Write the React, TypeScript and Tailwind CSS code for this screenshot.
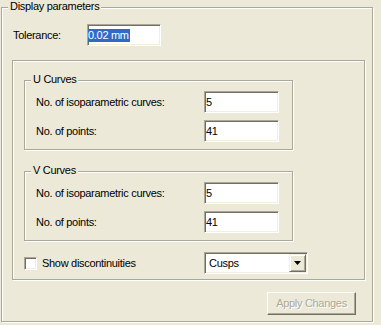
import type { ReactNode } from "react";

type GroupBoxProps = {
  title?: string;
  className?: string;
  children?: ReactNode;
};

// etched frame: gray line with a white line one pixel down/right
function GroupBox({ title, className = "", children }: GroupBoxProps) {
  return (
    <div
      className={`relative flex flex-col border border-[#aca899] shadow-[inset_1px_1px_0_#fff,1px_1px_0_#fff] ${className}`}
    >
      {title && (
        <span className="absolute -top-[8px] left-[6px] bg-[#ece9d8] px-[2px] leading-[13px]">
          {title}
        </span>
      )}
      {children}
    </div>
  );
}

const sunken =
  "border border-t-[#aca899] border-l-[#aca899] border-r-white border-b-white shadow-[inset_1px_1px_0_#716f64,inset_-1px_-1px_0_#f1efe2] bg-white";

function Field({ value }: { value: string }) {
  return (
    <div className={`flex h-[22px] w-[75px] items-center pl-[1px] ${sunken}`}>
      <span className="leading-[13px]">{value}</span>
    </div>
  );
}

function FieldRow({ label, value, className = "" }: { label: string; value: string; className?: string }) {
  return (
    <div className={`flex h-[22px] items-center pl-[11px] ${className}`}>
      <span className="w-[168px]">{label}</span>
      <Field value={value} />
    </div>
  );
}

export default function App() {
  return (
    <div className="h-[325px] w-[381px] bg-[#ece9d8] pl-[1px] pt-[7px] font-['Liberation_Sans',Arial,sans-serif] text-[11px] tracking-[-0.3px] text-black">
      <GroupBox title="Display parameters" className="h-[315px] w-[372px]">
        {/* Tolerance */}
        <div className="ml-[11px] mt-[16px] flex h-[22px] items-center">
          <span className="w-[74px]">Tolerance:</span>
          <div className={`flex h-[22px] w-[74px] items-center ${sunken}`}>
            <span className="bg-[#316ac5] pr-[1px] leading-[13px] text-white">0.02 mm</span>
          </div>
        </div>

        <GroupBox className="ml-[10px] mt-[14px] h-[220px] w-[353px]">
          <GroupBox title="U Curves" className="ml-[11px] mt-[19px] h-[70px] w-[269px]">
            <FieldRow label="No. of isoparametric curves:" value="5" className="mt-[10px]" />
            <FieldRow label="No. of points:" value="41" className="mt-[7px]" />
          </GroupBox>

          <GroupBox title="V Curves" className="ml-[11px] mt-[21px] h-[70px] w-[269px]">
            <FieldRow label="No. of isoparametric curves:" value="5" className="mt-[10px]" />
            <FieldRow label="No. of points:" value="41" className="mt-[7px]" />
          </GroupBox>

          {/* discontinuities row */}
          <div className="ml-[11px] mt-[11px] flex h-[22px] items-center">
            <div className={`h-[13px] w-[13px] ${sunken}`} />
            <span className="ml-[5px] w-[162px]">Show discontinuities</span>
            <div className={`flex h-[22px] w-[104px] items-center p-[1px] ${sunken}`}>
              <span className="flex-1 pl-[3px] leading-[13px]">Cusps</span>
              <div className="flex h-[18px] w-[17px] items-center justify-center border border-t-[#f1efe2] border-l-[#f1efe2] border-r-[#716f64] border-b-[#716f64] bg-[#ece9d8] shadow-[inset_1px_1px_0_#fff,inset_-1px_-1px_0_#aca899]">
                <svg width="7" height="4" viewBox="0 0 7 4">
                  <path d="M0 0h7L3.5 4z" fill="#000" />
                </svg>
              </div>
            </div>
          </div>
        </GroupBox>

        <button
          disabled
          className="ml-[265px] mt-[12px] flex h-[23px] w-[89px] items-center justify-center border border-t-white border-l-white border-r-[#716f64] border-b-[#716f64] bg-[#ece9d8] text-[#aca899] shadow-[inset_-1px_-1px_0_#aca899] [text-shadow:1px_1px_0_#fff]"
        >
          Apply Changes
        </button>
      </GroupBox>
    </div>
  );
}
